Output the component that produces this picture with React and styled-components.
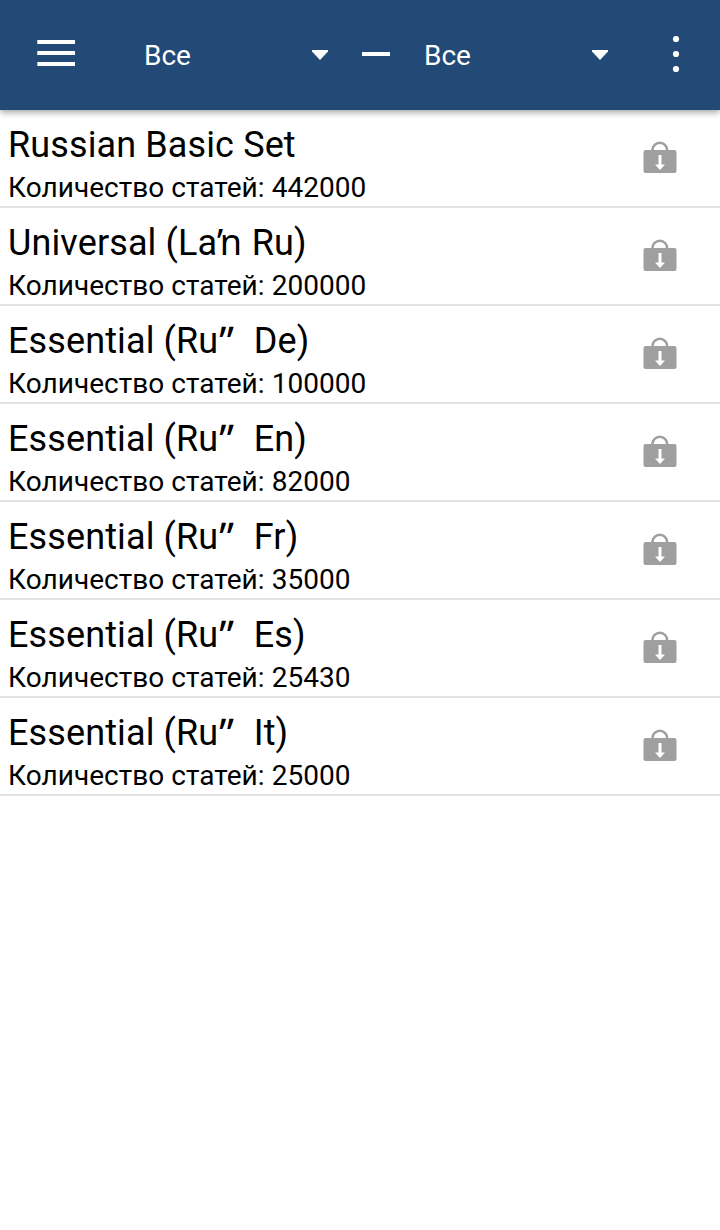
import React from 'react';
import styled, { createGlobalStyle } from 'styled-components';

const GlobalStyle = createGlobalStyle`
  * { box-sizing: border-box; }
  body { margin: 0; background: #fff; font-family: Roboto, "Noto Sans", sans-serif; color: #000; }
`;

const Screen = styled.div`
  min-height: 1230px;
  background: #fff;
`;

const Toolbar = styled.header`
  position: relative;
  display: flex;
  align-items: center;
  height: 110px;
  padding: 0 40px 2px 37px;
  background: #234a77;
  color: #fff;
  box-shadow: 0 2px 7px rgba(0, 0, 0, 0.4);
`;

const IconButton = styled.button`
  display: flex;
  padding: 0;
  border: 0;
  background: none;
`;

const MenuButton = styled(IconButton)`
  margin-bottom: 2px;
`;

const Language = styled.div`
  display: flex;
  align-items: center;
  justify-content: space-between;
  width: 184px;
  margin-left: ${(p) => p.$gap}px;
  font-size: 28px;
  line-height: 32px;

  span { padding-top: 3px; }
  svg { margin-top: 2px; }
`;

const Dash = styled.span`
  width: 28px;
  height: 4px;
  margin-left: 34px;
  background: #fff;
`;

const More = styled(IconButton)`
  margin-left: auto;
`;

const List = styled.ul`
  margin: 0;
  padding: 0;
  list-style: none;
`;

const Row = styled.li`
  display: flex;
  justify-content: space-between;
  height: 98px;
  padding: 14px 43px 0 8px;
  border-bottom: 2px solid #e2e2e2;
`;

const Title = styled.div`
  height: 42px;
  font-size: 36px;
  line-height: 42px;
  letter-spacing: 0.12px;
  white-space: pre;
`;

const DoublePrime = styled.span`
  display: inline-block;
  height: 42px;
  margin: 0 1.5px 0 1px;
  font-family: "Noto Sans", sans-serif;
  font-size: 41px;
  line-height: 42px;
  vertical-align: top;
`;

const Apostrophe = styled.span`
  display: inline-block;
  height: 42px;
  margin-right: 0.5px;
  font-family: "Noto Sans", sans-serif;
  line-height: 40px;
  vertical-align: top;
`;

const Count = styled.div`
  margin-top: 5px;
  font-size: 28px;
  line-height: 33px;
  letter-spacing: 0.04px;
`;

const IconSlot = styled.div`
  padding-top: 17px;
`;

const essential = (language) => (
  <>Essential (Ru<DoublePrime>ʺ</DoublePrime>{`  ${language})`}</>
);

const sets = [
  { id: 'basic', title: 'Russian Basic Set', count: 442000 },
  { id: 'universal', title: <>Universal (La<Apostrophe>ŉ</Apostrophe> Ru)</>, count: 200000 },
  { id: 'de', title: essential('De'), count: 100000 },
  { id: 'en', title: essential('En'), count: 82000 },
  { id: 'fr', title: essential('Fr'), count: 35000 },
  { id: 'es', title: essential('Es'), count: 25430 },
  { id: 'it', title: essential('It'), count: 25000 },
];

const Caret = () => (
  <svg width="16" height="10" viewBox="0 0 16 10"><path d="M0 0h16v1.5L8 10 0 1.5z" fill="#fff" /></svg>
);

const BagIcon = () => (
  <svg width="34" height="34" viewBox="0 0 34 34">
    <path d="M9.500 11V9a7.300 7.300 0 0 1 14.600 0v2" fill="none" stroke="#9f9f9f" strokeWidth="2.5" />
    <rect x="0.5" y="9" width="33" height="23" rx="2" fill="#9f9f9f" />
    <path d="M15.500 14h3v9.500h3.500L17 29l-5-5.500h3.500z" fill="#fff" />
  </svg>
);

export default function App() {
  return (
    <Screen>
      <GlobalStyle />
      <Toolbar>
        <MenuButton aria-label="Меню">
          <svg width="38" height="26" viewBox="0 0 38 26"><path d="M.3 2H38M.3 13H38M.3 24H38" stroke="#fff" strokeWidth="4" /></svg>
        </MenuButton>
        <Language $gap={69}><span>Все</span><Caret /></Language>
        <Dash />
        <Language $gap={34}><span>Все</span><Caret /></Language>
        <More aria-label="Ещё">
          <svg width="8" height="38" viewBox="0 0 8 38" fill="#fff"><circle cx="4" cy="4" r="3.1" /><circle cx="4" cy="19" r="3.1" /><circle cx="4" cy="34" r="3.1" /></svg>
        </More>
      </Toolbar>
      <List>
        {sets.map(({ id, title, count }) => (
          <Row key={id}>
            <div>
              <Title>{title}</Title>
              <Count>Количество статей: {count}</Count>
            </div>
            <IconSlot><BagIcon /></IconSlot>
          </Row>
        ))}
      </List>
    </Screen>
  );
}
